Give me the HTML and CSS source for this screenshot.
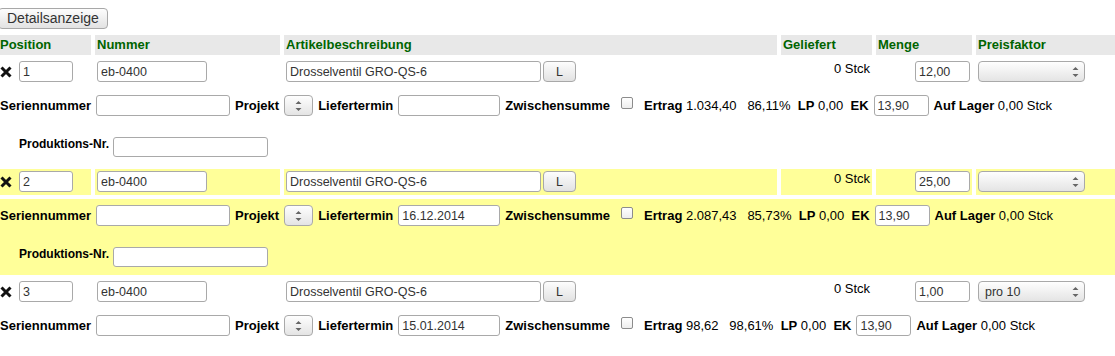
FILE: index.html
```html
<!DOCTYPE html>
<html lang="de">

<head>
  <meta charset="UTF-8">
  <meta name="viewport" content="width=device-width, initial-scale=1.0">
  <title>Positionen</title>
  <link rel="stylesheet" href="styles.css">
</head>

<body>
  <!-- Umschalter -->
  <div class="toolbar">
    <button class="btn btn-details" type="button">Detailsanzeige</button>
  </div>

  <!-- Positionstabelle -->
  <table class="positions">
    <thead>
      <tr class="listheading">
        <th class="c-pos">Position</th>
        <th class="c-num">Nummer</th>
        <th class="c-desc">Artikelbeschreibung</th>
        <th class="c-ship">Geliefert</th>
        <th class="c-qty">Menge</th>
        <th class="c-factor">Preisfaktor</th>
      </tr>
    </thead>
    <tbody>
      <!-- Position 1 -->
      <tr class="row-main">
        <td>
          <div class="cell">
            <svg class="remove" width="12" height="12" viewBox="0 0 12 12"><path d="M1.5 1.5 L10.5 10.5 M10.5 1.5 L1.5 10.5" /></svg>
            <input class="inp inp-pos" type="text" value="1">
          </div>
        </td>
        <td><div class="cell"><input class="inp inp-num" type="text" value="eb-0400"></div></td>
        <td>
          <div class="cell">
            <input class="inp inp-desc" type="text" value="Drosselventil GRO-QS-6">
            <button class="btn btn-small" type="button">L</button>
          </div>
        </td>
        <td class="right">0 Stck</td>
        <td><div class="cell cell-right"><input class="inp inp-qty" type="text" value="12,00"></div></td>
        <td>
          <div class="cell">
            <span class="sel">
              <select class="sel-wide"><option></option></select>
              <svg class="arrows" width="7" height="12" viewBox="0 0 7 12"><path d="M0.5 4 L3.5 1 L6.5 4 Z M0.5 8 L3.5 11 L6.5 8 Z" /></svg>
            </span>
          </div>
        </td>
      </tr>
      <tr class="row-detail">
        <td colspan="6">
          <div class="detail-line">
            <b>Seriennummer</b>
            <input class="inp inp-serial" type="text">
            <b>Projekt</b>
            <span class="sel sel-narrow">
              <select class="sel-small"><option></option></select>
              <svg class="arrows" width="7" height="12" viewBox="0 0 7 12"><path d="M0.5 4 L3.5 1 L6.5 4 Z M0.5 8 L3.5 11 L6.5 8 Z" /></svg>
            </span>
            <b>Liefertermin</b>
            <input class="inp inp-date" type="text" value="">
            <b>Zwischensumme</b>
            <span class="check"></span>
            <span class="vals"><b>Ertrag</b> 1.034,40   86,11%  <b>LP</b> 0,00  <b>EK</b></span>
            <input class="inp inp-ek" type="text" value="13,90">
            <span class="vals"><b>Auf Lager</b> 0,00 Stck</span>
          </div>
          <div class="prod-line">
            <span class="prod-label">Produktions-Nr.</span>
            <input class="inp inp-prod" type="text">
          </div>
        </td>
      </tr>

      <!-- Position 2 -->
      <tr class="row-main listrow1">
        <td>
          <div class="cell">
            <svg class="remove" width="12" height="12" viewBox="0 0 12 12"><path d="M1.5 1.5 L10.5 10.5 M10.5 1.5 L1.5 10.5" /></svg>
            <input class="inp inp-pos" type="text" value="2">
          </div>
        </td>
        <td><div class="cell"><input class="inp inp-num" type="text" value="eb-0400"></div></td>
        <td>
          <div class="cell">
            <input class="inp inp-desc" type="text" value="Drosselventil GRO-QS-6">
            <button class="btn btn-small" type="button">L</button>
          </div>
        </td>
        <td class="right">0 Stck</td>
        <td><div class="cell cell-right"><input class="inp inp-qty" type="text" value="25,00"></div></td>
        <td>
          <div class="cell">
            <span class="sel">
              <select class="sel-wide"><option></option></select>
              <svg class="arrows" width="7" height="12" viewBox="0 0 7 12"><path d="M0.5 4 L3.5 1 L6.5 4 Z M0.5 8 L3.5 11 L6.5 8 Z" /></svg>
            </span>
          </div>
        </td>
      </tr>
      <tr class="row-detail listrow1">
        <td colspan="6">
          <div class="detail-line">
            <b>Seriennummer</b>
            <input class="inp inp-serial" type="text">
            <b>Projekt</b>
            <span class="sel sel-narrow">
              <select class="sel-small"><option></option></select>
              <svg class="arrows" width="7" height="12" viewBox="0 0 7 12"><path d="M0.5 4 L3.5 1 L6.5 4 Z M0.5 8 L3.5 11 L6.5 8 Z" /></svg>
            </span>
            <b>Liefertermin</b>
            <input class="inp inp-date" type="text" value="16.12.2014">
            <b>Zwischensumme</b>
            <span class="check"></span>
            <span class="vals"><b>Ertrag</b> 2.087,43   85,73%  <b>LP</b> 0,00  <b>EK</b></span>
            <input class="inp inp-ek" type="text" value="13,90">
            <span class="vals"><b>Auf Lager</b> 0,00 Stck</span>
          </div>
          <div class="prod-line">
            <span class="prod-label">Produktions-Nr.</span>
            <input class="inp inp-prod" type="text">
          </div>
        </td>
      </tr>

      <!-- Position 3 -->
      <tr class="row-main">
        <td>
          <div class="cell">
            <svg class="remove" width="12" height="12" viewBox="0 0 12 12"><path d="M1.5 1.5 L10.5 10.5 M10.5 1.5 L1.5 10.5" /></svg>
            <input class="inp inp-pos" type="text" value="3">
          </div>
        </td>
        <td><div class="cell"><input class="inp inp-num" type="text" value="eb-0400"></div></td>
        <td>
          <div class="cell">
            <input class="inp inp-desc" type="text" value="Drosselventil GRO-QS-6">
            <button class="btn btn-small" type="button">L</button>
          </div>
        </td>
        <td class="right">0 Stck</td>
        <td><div class="cell cell-right"><input class="inp inp-qty" type="text" value="1,00"></div></td>
        <td>
          <div class="cell">
            <span class="sel">
              <select class="sel-wide"><option>pro 10</option></select>
              <svg class="arrows" width="7" height="12" viewBox="0 0 7 12"><path d="M0.5 4 L3.5 1 L6.5 4 Z M0.5 8 L3.5 11 L6.5 8 Z" /></svg>
            </span>
          </div>
        </td>
      </tr>
      <tr class="row-detail">
        <td colspan="6">
          <div class="detail-line">
            <b>Seriennummer</b>
            <input class="inp inp-serial" type="text">
            <b>Projekt</b>
            <span class="sel sel-narrow">
              <select class="sel-small"><option></option></select>
              <svg class="arrows" width="7" height="12" viewBox="0 0 7 12"><path d="M0.5 4 L3.5 1 L6.5 4 Z M0.5 8 L3.5 11 L6.5 8 Z" /></svg>
            </span>
            <b>Liefertermin</b>
            <input class="inp inp-date" type="text" value="15.01.2014">
            <b>Zwischensumme</b>
            <span class="check"></span>
            <span class="vals"><b>Ertrag</b> 98,62   98,61%  <b>LP</b> 0,00  <b>EK</b></span>
            <input class="inp inp-ek" type="text" value="13,90">
            <span class="vals"><b>Auf Lager</b> 0,00 Stck</span>
          </div>
        </td>
      </tr>
    </tbody>
  </table>
</body>

</html>
```

FILE: styles.css
```css
* {
  box-sizing: border-box;
}

html,
body {
  margin: 0;
  padding: 0;
  overflow: hidden;
}

body {
  font-family: "Liberation Sans", Arial, sans-serif;
  font-size: 13px;
  color: #000;
  background: #fff;
}

/* Knoepfe */
.btn {
  font-family: inherit;
  color: #333;
  background: linear-gradient(#fdfdfd, #e2e2e2);
  border: 1px solid #a8a8a8;
  border-radius: 4px;
  margin: 0;
  cursor: pointer;
}

.toolbar {
  padding: 8px 0 2px;
  margin-left: -2px;
}

.btn-details {
  display: block;
  height: 21px;
  padding: 0 8px;
  font-size: 14px;
  line-height: 19px;
}

.btn-small {
  width: 33px;
  height: 21px;
  margin-left: 2px;
  padding: 0;
  font-size: 12.5px;
}

/* Tabelle */
.positions {
  border-collapse: separate;
  border-spacing: 4px;
  margin-left: -6px;
  width: 1127px;
  table-layout: fixed;
}

.positions th {
  height: 20px;
  padding: 0 2px;
  line-height: 20px;
  text-align: left;
  white-space: nowrap;
}

.positions td {
  padding: 2px;
  line-height: 16px;
  vertical-align: top;
}

.listheading th {
  background: #e8e8e8;
  color: #006400;
  font-weight: bold;
}

.c-pos { width: 93px; }
.c-num { width: 185px; }
.c-desc { width: 493px; }
.c-ship { width: 91px; }
.c-qty { width: 96px; }
.c-factor { width: 141px; }

.listrow1 td {
  background: #ffff99;
}

.row-main td {
  height: 26px;
}

.positions td.right {
  text-align: right;
}

.cell {
  display: flex;
  align-items: center;
}

.cell-right {
  justify-content: flex-end;
}

.remove {
  flex: none;
  margin-right: 7px;
}

.remove path {
  stroke: #111;
  stroke-width: 3;
  fill: none;
}

/* Eingabefelder */
.inp {
  font-family: inherit;
  font-size: 12.5px;
  color: #333;
  height: 21px;
  margin: 0;
  padding: 0 3px;
  border: 1px solid #a9a9a9;
  border-radius: 3px;
  background: #fff;
  outline: none;
}

.inp-pos { width: 54px; }
.inp-num { width: 110px; }
.inp-desc { width: 255px; }
.inp-qty { width: 55px; }
.inp-serial { width: 134px; }
.inp-date { width: 102px; }
.inp-ek { width: 55px; }

.inp-prod {
  width: 155px;
  height: 20px;
}

/* Auswahlfelder */
.sel {
  position: relative;
  display: inline-block;
  flex: none;
}

.sel select {
  -webkit-appearance: none;
  appearance: none;
  display: block;
  height: 21px;
  margin: 0;
  padding: 0 18px 0 6px;
  font-family: inherit;
  font-size: 12.5px;
  color: #333;
  border: 1px solid #a9a9a9;
  border-radius: 4px;
  background: linear-gradient(#fefefe, #e4e4e4);
}

.sel .sel-wide {
  width: 107px;
}

.sel .sel-small {
  width: 29px;
}

.sel .arrows {
  position: absolute;
  right: 6px;
  top: 5px;
  pointer-events: none;
}

.sel-narrow .arrows {
  right: 11px;
}

.arrows path {
  fill: #666;
}

/* Detailzeile */
.row-detail td {
  height: 76px;
}

.detail-line {
  display: flex;
  align-items: center;
  gap: 5px;
  margin-top: 4px;
  white-space: nowrap;
}

.vals {
  white-space: pre;
}

.check {
  flex: none;
  align-self: flex-start;
  width: 12px;
  height: 12px;
  margin: 2px 6px 0 6px;
  border: 1px solid #8c8c8c;
  border-radius: 2px;
  background: linear-gradient(#fff, #ededed);
}

.prod-line {
  display: flex;
  align-items: flex-start;
  margin-top: 21px;
}

.prod-label {
  margin: -1px 4px 0 19px;
  font-size: 12px;
  font-weight: bold;
}
```
